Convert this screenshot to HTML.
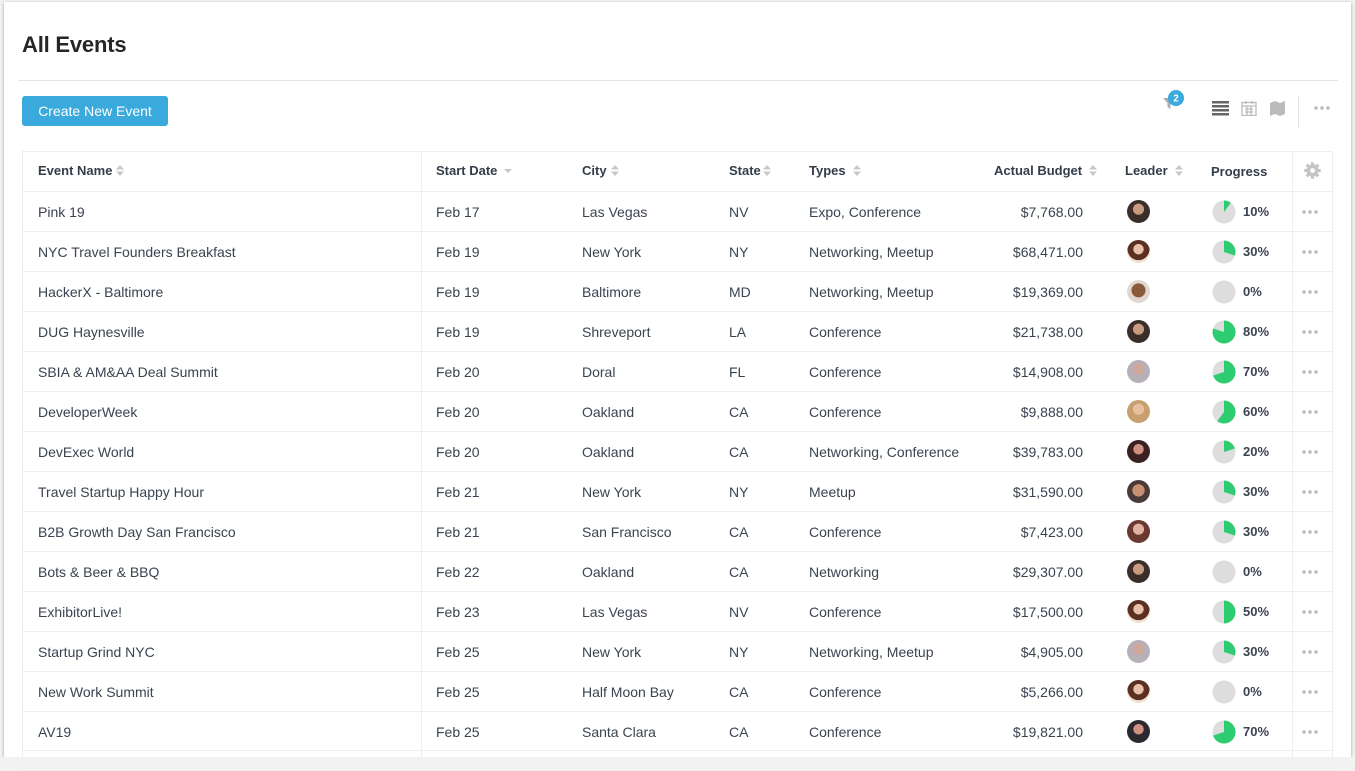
<!DOCTYPE html>
<html><head><meta charset="utf-8">
<style>
*{margin:0;padding:0;box-sizing:border-box}
body{width:1355px;height:763px;background:#f2f2f2;font-family:"Liberation Sans",sans-serif;color:#3a4350;position:relative;overflow:hidden}
.win{position:absolute;left:4px;top:2px;width:1347px;height:755px;background:#fff;box-shadow:0 1px 3px rgba(0,0,0,.35)}
h1{position:absolute;left:22px;top:32px;font-size:22px;font-weight:bold;color:#262626;letter-spacing:-.2px}
.hr{position:absolute;left:18px;top:80px;width:1320px;height:1px;background:#e3e3e3}
.btn{position:absolute;left:22px;top:96px;width:146px;height:30px;background:#3aa9dc;border-radius:3px;color:#fff;font-size:14px;line-height:30px;text-align:center}
.tbl{position:absolute;left:22px;top:151px;width:1311px;height:620px;border:1px solid #eee}
.vl{position:absolute;top:151px;width:1px;height:620px;background:#eee}
.row{position:absolute;left:23px;width:1309px;height:40px;border-top:1px solid #eee;font-size:14px}
.row span{position:absolute;top:12px;white-space:nowrap}
.hd span{font-weight:bold;font-size:13px;color:#333d4a;top:12px}
.c1{left:15px}.c2{left:413px}.c3{left:559px}.c4{left:706px}.c5{left:786px}
.c6{right:249px;text-align:right}
.c8{left:1220px;font-weight:bold;font-size:13px!important}
.av{position:absolute;left:1104px;top:8px;width:23px;height:23px;border-radius:50%;background:radial-gradient(circle at 50% 40%,#c89a80 0 30%,#3a2e2a 32%)}
.pie{position:absolute;left:1189px;top:8px}
.dots{position:absolute;left:1278px;top:18px;width:18px;height:4px;background:radial-gradient(circle,#bbb 1.6px,transparent 2px) 0 0/6px 4px repeat-x}
.ar{display:inline-block;vertical-align:middle;margin-left:4px;margin-top:-2px}
</style></head><body>
<div class="win"></div>
<h1>All Events</h1>
<div class="hr"></div>
<div class="btn">Create New Event</div>
<svg style="position:absolute;left:1160px;top:88px" width="30" height="30"><path d="M3 10h12l-4.5 5v6l-3-2v-4z" fill="#aab"/><circle cx="16" cy="10" r="8" fill="#3aa9dc"/><text x="16" y="13.5" font-size="10" font-weight="bold" fill="#fff" text-anchor="middle" font-family="Liberation Sans">2</text></svg>
<svg style="position:absolute;left:1211px;top:100px" width="80" height="16"><g fill="#666"><rect x="1" y="1" width="17" height="2.5"/><rect x="1" y="5" width="17" height="2.5"/><rect x="1" y="9" width="17" height="2.5"/><rect x="1" y="13" width="17" height="2.5"/></g><g fill="none" stroke="#bbb" stroke-width="1.3"><rect x="31" y="2.5" width="14" height="13"/><path d="M31 6h14M35 1v3M41 1v3M34 9h8M34 12h8M36 6v9M40 6v9"/></g><path d="M59 3l5-2 5 2 5-2v13l-5 2-5-2-5 2z" fill="#bbb"/></svg>
<div style="position:absolute;left:1298px;top:95px;width:1px;height:32px;background:#e3e3e3"></div>
<div class="dots" style="left:1313px;top:106px"></div>
<div class="tbl"></div>
<div class="vl" style="left:421px"></div>
<div class="vl" style="left:1292px"></div>
<div class="row hd" style="top:151px;border-top:none">
<span class="c1">Event Name<svg class="ar" width="8" height="11"><path d="M0 4.5L4 0 8 4.5zM0 6.5L4 11 8 6.5z" fill="#c8c8c8"/></svg></span>
<span class="c2">Start Date<svg class="ar" width="8" height="11" style="margin-left:7px"><path d="M0 4L4 8 8 4z" fill="#c8c8c8"/></svg></span>
<span class="c3">City<svg class="ar" width="8" height="11"><path d="M0 4.5L4 0 8 4.5zM0 6.5L4 11 8 6.5z" fill="#c8c8c8"/></svg></span>
<span class="c4">State<svg class="ar" width="8" height="11" style="margin-left:2px"><path d="M0 4.5L4 0 8 4.5zM0 6.5L4 11 8 6.5z" fill="#c8c8c8"/></svg></span>
<span class="c5">Types<svg class="ar" width="8" height="11" style="margin-left:7px"><path d="M0 4.5L4 0 8 4.5zM0 6.5L4 11 8 6.5z" fill="#c8c8c8"/></svg></span>
<span style="left:971px">Actual Budget<svg class="ar" width="8" height="11" style="margin-left:7px"><path d="M0 4.5L4 0 8 4.5zM0 6.5L4 11 8 6.5z" fill="#c8c8c8"/></svg></span>
<span style="left:1102px">Leader<svg class="ar" width="8" height="11" style="margin-left:7px"><path d="M0 4.5L4 0 8 4.5zM0 6.5L4 11 8 6.5z" fill="#c8c8c8"/></svg></span>
<span style="left:1188px;top:13px">Progress</span>
<svg style="position:absolute;left:1281px;top:11px" width="17" height="17" viewBox="-8.5 -8.5 17 17"><g fill="#c4c4c4"><circle r="6"/><g id="t"><rect x="-1.6" y="-8.2" width="3.2" height="4"/></g><use href="#t" transform="rotate(45)"/><use href="#t" transform="rotate(90)"/><use href="#t" transform="rotate(135)"/><use href="#t" transform="rotate(180)"/><use href="#t" transform="rotate(225)"/><use href="#t" transform="rotate(270)"/><use href="#t" transform="rotate(315)"/></g><circle r="2.4" fill="#fff"/></svg>
</div>

<div class="row" style="top:191px"><span class="c1">Pink 19</span><span class="c2">Feb 17</span><span class="c3">Las Vegas</span><span class="c4">NV</span><span class="c5">Expo, Conference</span><span class="c6">$7,768.00</span><div class="av"></div><svg class="pie" width="24" height="24" viewBox="-12 -12 24 24"><circle r="11.5" fill="#ddd"/><path d="M0 0V-11.5A11.5 11.5 0 0 1 6.76 -9.3z" fill="#2ecc71"/></svg><span class="c8">10%</span><div class="dots"></div></div>
<div class="row" style="top:231px"><span class="c1">NYC Travel Founders Breakfast</span><span class="c2">Feb 19</span><span class="c3">New York</span><span class="c4">NY</span><span class="c5">Networking, Meetup</span><span class="c6">$68,471.00</span><div class="av" style="background:radial-gradient(circle at 50% 40%,#e8c0a8 0 28%,#5a3020 30% 60%,#f0e0d0 62%)"></div><svg class="pie" width="24" height="24" viewBox="-12 -12 24 24"><circle r="11.5" fill="#ddd"/><path d="M0 0V-11.5A11.5 11.5 0 0 1 10.94 3.55z" fill="#2ecc71"/></svg><span class="c8">30%</span><div class="dots"></div></div>
<div class="row" style="top:271px"><span class="c1">HackerX - Baltimore</span><span class="c2">Feb 19</span><span class="c3">Baltimore</span><span class="c4">MD</span><span class="c5">Networking, Meetup</span><span class="c6">$19,369.00</span><div class="av" style="background:radial-gradient(circle at 50% 45%,#8a5a3a 0 40%,#e0d8d0 42%)"></div><svg class="pie" width="24" height="24" viewBox="-12 -12 24 24"><circle r="11.5" fill="#ddd"/></svg><span class="c8">0%</span><div class="dots"></div></div>
<div class="row" style="top:311px"><span class="c1">DUG Haynesville</span><span class="c2">Feb 19</span><span class="c3">Shreveport</span><span class="c4">LA</span><span class="c5">Conference</span><span class="c6">$21,738.00</span><div class="av"></div><svg class="pie" width="24" height="24" viewBox="-12 -12 24 24"><circle r="11.5" fill="#ddd"/><path d="M0 0V-11.5A11.5 11.5 0 1 1 -10.94 -3.55z" fill="#2ecc71"/></svg><span class="c8">80%</span><div class="dots"></div></div>
<div class="row" style="top:351px"><span class="c1">SBIA &amp; AM&amp;AA Deal Summit</span><span class="c2">Feb 20</span><span class="c3">Doral</span><span class="c4">FL</span><span class="c5">Conference</span><span class="c6">$14,908.00</span><div class="av" style="background:radial-gradient(circle at 50% 40%,#d0a898 0 30%,#b8b0b8 32%)"></div><svg class="pie" width="24" height="24" viewBox="-12 -12 24 24"><circle r="11.5" fill="#ddd"/><path d="M0 0V-11.5A11.5 11.5 0 1 1 -10.94 3.55z" fill="#2ecc71"/></svg><span class="c8">70%</span><div class="dots"></div></div>
<div class="row" style="top:391px"><span class="c1">DeveloperWeek</span><span class="c2">Feb 20</span><span class="c3">Oakland</span><span class="c4">CA</span><span class="c5">Conference</span><span class="c6">$9,888.00</span><div class="av" style="background:radial-gradient(circle at 50% 40%,#e8c0a0 0 30%,#c8a070 32%)"></div><svg class="pie" width="24" height="24" viewBox="-12 -12 24 24"><circle r="11.5" fill="#ddd"/><path d="M0 0V-11.5A11.5 11.5 0 1 1 -6.76 9.3z" fill="#2ecc71"/></svg><span class="c8">60%</span><div class="dots"></div></div>
<div class="row" style="top:431px"><span class="c1">DevExec World</span><span class="c2">Feb 20</span><span class="c3">Oakland</span><span class="c4">CA</span><span class="c5">Networking, Conference</span><span class="c6">$39,783.00</span><div class="av" style="background:radial-gradient(circle at 50% 40%,#d09080 0 28%,#3a2020 30%)"></div><svg class="pie" width="24" height="24" viewBox="-12 -12 24 24"><circle r="11.5" fill="#ddd"/><path d="M0 0V-11.5A11.5 11.5 0 0 1 10.94 -3.55z" fill="#2ecc71"/></svg><span class="c8">20%</span><div class="dots"></div></div>
<div class="row" style="top:471px"><span class="c1">Travel Startup Happy Hour</span><span class="c2">Feb 21</span><span class="c3">New York</span><span class="c4">NY</span><span class="c5">Meetup</span><span class="c6">$31,590.00</span><div class="av" style="background:radial-gradient(circle at 50% 45%,#c89070 0 35%,#4a3a3a 37%)"></div><svg class="pie" width="24" height="24" viewBox="-12 -12 24 24"><circle r="11.5" fill="#ddd"/><path d="M0 0V-11.5A11.5 11.5 0 0 1 10.94 3.55z" fill="#2ecc71"/></svg><span class="c8">30%</span><div class="dots"></div></div>
<div class="row" style="top:511px"><span class="c1">B2B Growth Day San Francisco</span><span class="c2">Feb 21</span><span class="c3">San Francisco</span><span class="c4">CA</span><span class="c5">Conference</span><span class="c6">$7,423.00</span><div class="av" style="background:radial-gradient(circle at 50% 40%,#e0b0a0 0 30%,#6a3a30 32%)"></div><svg class="pie" width="24" height="24" viewBox="-12 -12 24 24"><circle r="11.5" fill="#ddd"/><path d="M0 0V-11.5A11.5 11.5 0 0 1 10.94 3.55z" fill="#2ecc71"/></svg><span class="c8">30%</span><div class="dots"></div></div>
<div class="row" style="top:551px"><span class="c1">Bots &amp; Beer &amp; BBQ</span><span class="c2">Feb 22</span><span class="c3">Oakland</span><span class="c4">CA</span><span class="c5">Networking</span><span class="c6">$29,307.00</span><div class="av"></div><svg class="pie" width="24" height="24" viewBox="-12 -12 24 24"><circle r="11.5" fill="#ddd"/></svg><span class="c8">0%</span><div class="dots"></div></div>
<div class="row" style="top:591px"><span class="c1">ExhibitorLive!</span><span class="c2">Feb 23</span><span class="c3">Las Vegas</span><span class="c4">NV</span><span class="c5">Conference</span><span class="c6">$17,500.00</span><div class="av" style="background:radial-gradient(circle at 50% 40%,#e8c0a8 0 28%,#5a3020 30% 60%,#f0e0d0 62%)"></div><svg class="pie" width="24" height="24" viewBox="-12 -12 24 24"><circle r="11.5" fill="#ddd"/><path d="M0 0V-11.5A11.5 11.5 0 0 1 0 11.5z" fill="#2ecc71"/></svg><span class="c8">50%</span><div class="dots"></div></div>
<div class="row" style="top:631px"><span class="c1">Startup Grind NYC</span><span class="c2">Feb 25</span><span class="c3">New York</span><span class="c4">NY</span><span class="c5">Networking, Meetup</span><span class="c6">$4,905.00</span><div class="av" style="background:radial-gradient(circle at 50% 40%,#d0a898 0 30%,#b8b0b8 32%)"></div><svg class="pie" width="24" height="24" viewBox="-12 -12 24 24"><circle r="11.5" fill="#ddd"/><path d="M0 0V-11.5A11.5 11.5 0 0 1 10.94 3.55z" fill="#2ecc71"/></svg><span class="c8">30%</span><div class="dots"></div></div>
<div class="row" style="top:671px"><span class="c1">New Work Summit</span><span class="c2">Feb 25</span><span class="c3">Half Moon Bay</span><span class="c4">CA</span><span class="c5">Conference</span><span class="c6">$5,266.00</span><div class="av" style="background:radial-gradient(circle at 50% 40%,#e8c0a8 0 28%,#5a3020 30% 60%,#f0e0d0 62%)"></div><svg class="pie" width="24" height="24" viewBox="-12 -12 24 24"><circle r="11.5" fill="#ddd"/></svg><span class="c8">0%</span><div class="dots"></div></div>
<div class="row" style="top:711px;border-bottom:1px solid #eee"><span class="c1">AV19</span><span class="c2">Feb 25</span><span class="c3">Santa Clara</span><span class="c4">CA</span><span class="c5">Conference</span><span class="c6">$19,821.00</span><div class="av" style="background:radial-gradient(circle at 50% 40%,#d09080 0 28%,#2a2a30 30%)"></div><svg class="pie" width="24" height="24" viewBox="-12 -12 24 24"><circle r="11.5" fill="#ddd"/><path d="M0 0V-11.5A11.5 11.5 0 1 1 -10.94 3.55z" fill="#2ecc71"/></svg><span class="c8">70%</span><div class="dots"></div></div>
<div style="position:absolute;left:0;top:757px;width:1355px;height:6px;background:#f2f2f2"></div>
</body></html>
